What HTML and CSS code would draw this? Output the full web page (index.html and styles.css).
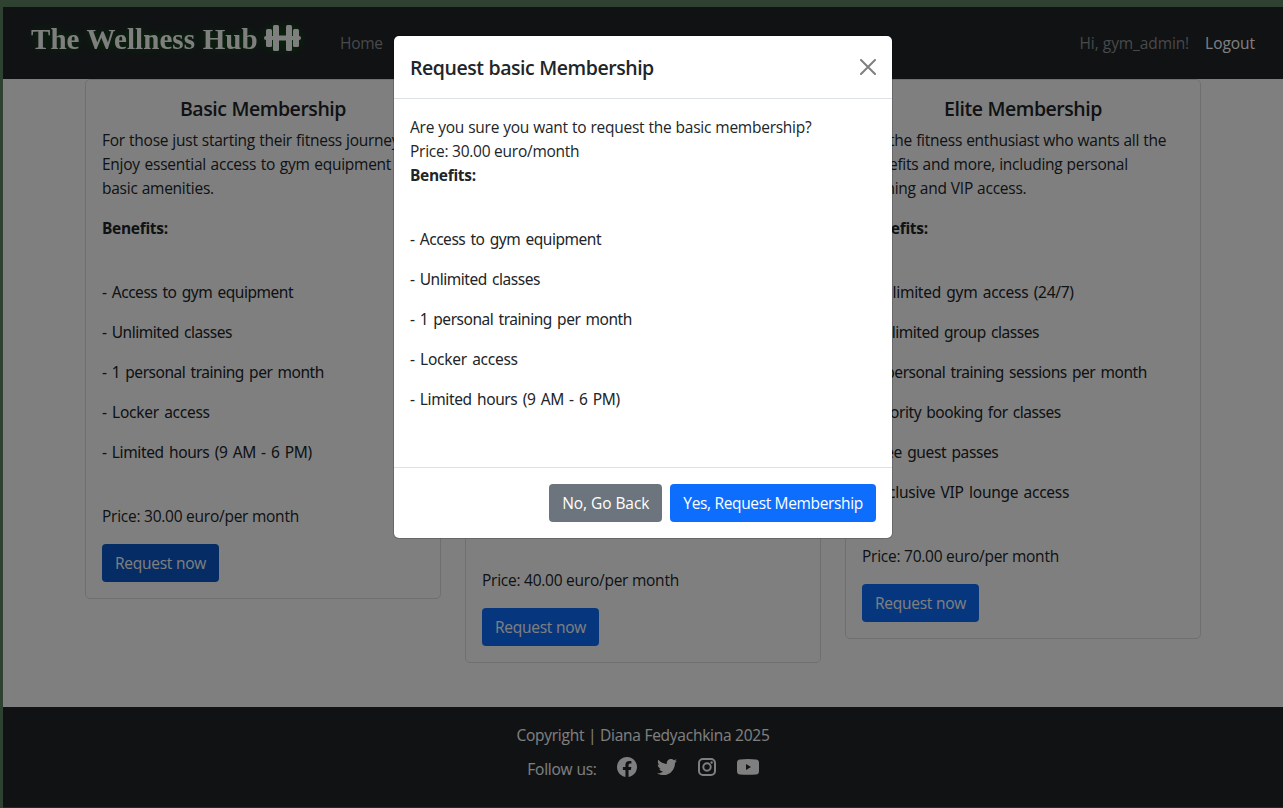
FILE: index.html
```html
<!DOCTYPE html>
<html lang="en">
<head>
<meta charset="utf-8">
<title>The Wellness Hub</title>
<link rel="stylesheet" href="styles.css">
</head>
<body>
<div class="page">
  <header class="navbar">
    <a class="brand"><span class="brand-name">The Wellness Hub</span>
      <svg class="dumbbell" width="38" height="28" viewBox="0 0 38 28"><g fill="#fff"><rect x="1" y="11" width="37" height="4" rx="2"/><rect x="3" y="4" width="6" height="18" rx="1.500"/><rect x="10" y="0" width="6" height="26" rx="1.500"/><rect x="15" y="10.500" width="9" height="5"/><rect x="23" y="0" width="6" height="26" rx="1.500"/><rect x="30" y="4" width="6" height="18" rx="1.500"/></g></svg>
    </a>
    <a class="nav-link">Home</a>
    <span class="nav-user">Hi, gym_admin!</span>
    <a class="nav-logout">Logout</a>
  </header>
  <main class="cards">
    <article class="card">
      <h5 class="card-title">Basic Membership</h5>
      <p class="card-text">For those just starting their fitness journey.<br><span class="spaced">Enjoy essential access to gym equipment and</span><br>basic amenities.</p>
      <p class="benefits-label">Benefits:</p>
      <div class="benefits"><p>- Access to gym equipment</p><p>- Unlimited classes</p><p>- 1 personal training per month</p><p class="wide">- Locker access</p><p class="hours">- Limited hours (9 AM - 6 PM)</p></div>
      <p class="price">Price: 30.00 euro/per month</p>
      <button class="btn btn-primary is-active">Request now</button>
    </article>
    <article class="card card-middle">
      <p class="price">Price: 40.00 euro/per month</p>
      <button class="btn btn-primary">Request now</button>
    </article>
    <article class="card">
      <h5 class="card-title">Elite Membership</h5>
      <p class="card-text">For the fitness enthusiast who wants all the<br>benefits and more, including personal<br>training and VIP access.</p>
      <p class="benefits-label">Benefits:</p>
      <div class="benefits"><p class="wide">- Unlimited gym access (24/7)</p><p>- Unlimited group classes</p><p>- 4 personal training sessions per month</p><p>- Priority booking for classes</p><p class="hours">- Free guest passes</p><p class="wide">- Exclusive VIP lounge access</p></div>
      <p class="price">Price: 70.00 euro/per month</p>
      <button class="btn btn-primary">Request now</button>
    </article>
  </main>
  <footer class="footer">
    <p class="copyright">Copyright | Diana Fedyachkina 2025</p>
    <div class="social">
      <span class="follow">Follow us:</span>
      <svg width="20" height="20" viewBox="0 0 16 16"><path fill="#fff" d="M16 8.049c0-4.446-3.582-8.050-8-8.050C3.580 0-.002 3.603-.002 8.050c0 4.017 2.926 7.347 6.750 7.951v-5.625h-2.030V8.050H6.750V6.275c0-2.017 1.195-3.131 3.022-3.131.876 0 1.791.157 1.791.157v1.980h-1.009c-.993 0-1.303.621-1.303 1.258v1.510h2.218l-.354 2.326H9.250V16c3.824-.604 6.750-3.934 6.750-7.951"/></svg>
      <svg width="20" height="20" viewBox="0 0 512 512"><path fill="#fff" d="M459.370 151.716c.325 4.548.325 9.097.325 13.645 0 138.720-105.583 298.558-298.558 298.558-59.452 0-114.680-17.219-161.137-47.106 8.447.974 16.568 1.299 25.340 1.299 49.055 0 94.213-16.568 130.274-44.832-46.132-.975-84.792-31.188-98.112-72.772 6.498.974 12.995 1.624 19.818 1.624 9.421 0 18.843-1.300 27.614-3.573-48.081-9.747-84.143-51.980-84.143-102.985v-1.299c13.969 7.797 30.214 12.670 47.431 13.319-28.264-18.843-46.781-51.005-46.781-87.391 0-19.492 5.197-37.360 14.294-52.954 51.655 63.675 129.300 105.258 216.365 109.807-1.624-7.797-2.599-15.918-2.599-24.040 0-57.828 46.782-104.934 104.934-104.934 30.213 0 57.502 12.670 76.670 33.137 23.715-4.548 46.456-13.320 66.599-25.340-7.798 24.366-24.366 44.833-46.132 57.827 21.117-2.273 41.584-8.122 60.426-16.243-14.292 20.791-32.161 39.308-52.628 54.253z"/></svg>
      <svg width="20" height="20" viewBox="0 0 20 20"><rect x="2" y="2" width="16" height="16" rx="4" fill="none" stroke="#fff" stroke-width="2"/><circle cx="10" cy="10" r="3.700" fill="none" stroke="#fff" stroke-width="2"/><circle cx="14.600" cy="5.500" r="1.200" fill="#fff"/></svg>
      <svg class="youtube" width="22" height="16" viewBox="0 0 22 16"><path fill="#fff" fill-rule="evenodd" d="M3 .5Q11-.3 19 .5Q22 .8 22 4V12Q22 15.200 19 15.500Q11 16.200 3 15.500Q0 15.200 0 12V4Q0 .8 3 .5ZM9 5V11L14 8Z"/></svg>
    </div>
  </footer>
</div>
<div class="backdrop">
  <section class="modal">
    <div class="modal-header"><h5 class="modal-title">Request basic Membership</h5>
      <svg class="close" width="16" height="16" viewBox="0 0 16 16"><path d="M1 1L15 15M15 1L1 15" stroke="#7f7f7f" stroke-width="2" stroke-linecap="round"/></svg></div>
    <div class="modal-body">
      <p>Are you sure you want to request the basic membership?</p><p class="price-line">Price: 30.00 euro/month</p><p class="strong">Benefits:</p>
      <div class="benefits"><p>- Access to gym equipment</p><p>- Unlimited classes</p><p>- 1 personal training per month</p><p class="wide">- Locker access</p><p class="hours">- Limited hours (9 AM - 6 PM)</p></div>
    </div>
    <div class="modal-footer"><button class="btn btn-secondary">No, Go Back</button><button class="btn btn-primary btn-confirm">Yes, Request Membership</button></div>
  </section>
</div>
</body>
</html>
```
FILE: styles.css
```css
* { box-sizing: border-box; }
body { margin: 0; height: 808px; overflow: hidden; background: #5f8262; color: #212529; font: 15.5px/24px "Open Sans", sans-serif; letter-spacing: -0.25px; word-spacing: 0.35px; white-space: nowrap; }
p, h5 { margin: 0; }
.page { height: 808px; padding: 7px 0 0 3px; display: flex; flex-direction: column; }
.navbar { height: 72px; flex: none; background: #212529; display: flex; align-items: center; padding: 0 28px; color: #fff; }
.brand { display: flex; align-items: center; width: 309px; height: 72px; padding-bottom: 8px; filter: drop-shadow(0 0 4px #0a5c0a); }
.brand-name { font: bold 29px/40px "Liberation Serif", serif; letter-spacing: 0.05px; width: 232px; }
.nav-link { color: #909294; }
.nav-user { margin-left: auto; color: #909294; letter-spacing: -0.1px; }
.nav-logout { margin-left: 16px; letter-spacing: -0.05px; }
.cards { height: 628px; flex: none; background: #fff; display: flex; align-items: flex-start; gap: 24px; padding-left: 82px; }
.card { width: 356px; border: 1px solid #dfdfdf; border-radius: 5px; padding: 16px; overflow: hidden; }
.card-middle { height: 584px; display: flex; flex-direction: column; justify-content: flex-end; align-items: flex-start; }
.card-title { font-size: 19.5px; font-weight: 600; letter-spacing: -0.45px; line-height: 24px; padding-top: 1px; margin-bottom: 7px; text-align: center; }
.card-text { margin-bottom: 16px; }
.spaced { word-spacing: 0.9px; }
.benefits-label, .strong { font-weight: 700; letter-spacing: -0.3px; }
.benefits { padding-top: 40px; padding-bottom: 24px; font-family: "Noto Sans", sans-serif; letter-spacing: -0.46px; word-spacing: 1.6px; }
.benefits p { margin-bottom: 16px; }
.benefits .wide { letter-spacing: -0.27px; }
.benefits .hours { letter-spacing: -0.38px; }
.price { margin-bottom: 16px; }
.price, .price-line { word-spacing: 0; }
.btn { display: block; border: 0; border-radius: 4px; height: 38px; padding: 0 13px; color: #fff; font: inherit; letter-spacing: inherit; }
.btn-primary { background: #0d6efd; }
.btn-secondary { background: #6c757d; letter-spacing: -0.07px; }
.btn-confirm { letter-spacing: -0.34px; }
.is-active { background: #0a58ca; }
.footer { height: 101px; flex: none; background: #212529; border-bottom: 1px solid #4a4c4e; color: #fff; padding-top: 16px; display: flex; flex-direction: column; align-items: center; }
.copyright { word-spacing: 0; }
.social { display: flex; align-items: center; gap: 20px; height: 40px; }
.follow { padding-top: 3px; }
.backdrop { position: absolute; inset: 0; background: rgba(0,0,0,.5); }
.modal { width: 498px; height: 502px; margin: 36px 0 0 394px; background: #fff; border-radius: 5px; box-shadow: 0 0 0 1px rgba(0,0,0,.18); display: flex; flex-direction: column; }
.modal-header { height: 63px; border-bottom: 1px solid #dee2e6; display: flex; align-items: center; justify-content: space-between; padding: 0 16px; }
.modal-title { font-size: 19.5px; font-weight: 600; letter-spacing: -0.45px; padding-top: 2px; }
.modal-body { flex: 1; padding: 16px; }
.modal-footer { height: 71px; border-top: 1px solid #dee2e6; display: flex; align-items: center; justify-content: flex-end; gap: 8px; padding: 0 16px; }
```
